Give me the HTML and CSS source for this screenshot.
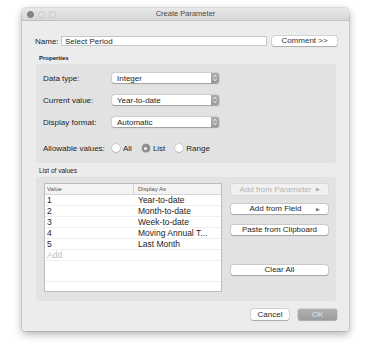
FILE: index.html
```html
<!DOCTYPE html>
<html>
<head>
<meta charset="utf-8">
<link rel="stylesheet" href="styles.css">
</head>
<body>
<div class="window">
  <div class="titlebar">
    <div class="lights"><span class="light dark"></span><span class="light"></span><span class="light"></span></div>
    <div class="title">Create Parameter</div>
    <div></div>
  </div>
  <div class="content">
    <div class="name-row">
      <span class="name-label">Name:</span>
      <div class="textfield">Select Period</div>
      <div class="btn comment">Comment &gt;&gt;</div>
    </div>
    <div class="section-label bold">Properties</div>
    <div class="panel props">
      <div class="prop-row"><span class="prop-label">Data type:</span><div class="select"><span>Integer</span><span class="stepper"><svg width="8" height="10" viewBox="0 0 8 10"><path d="M2.3 4 L4 2.4 L5.7 4 M2.3 6 L4 7.6 L5.7 6" fill="none" stroke="#fff" stroke-width="0.9"/></svg></span></div></div>
      <div class="prop-row"><span class="prop-label">Current value:</span><div class="select"><span>Year-to-date</span><span class="stepper"><svg width="8" height="10" viewBox="0 0 8 10"><path d="M2.3 4 L4 2.4 L5.7 4 M2.3 6 L4 7.6 L5.7 6" fill="none" stroke="#fff" stroke-width="0.9"/></svg></span></div></div>
      <div class="prop-row"><span class="prop-label">Display format:</span><div class="select"><span>Automatic</span><span class="stepper"><svg width="8" height="10" viewBox="0 0 8 10"><path d="M2.3 4 L4 2.4 L5.7 4 M2.3 6 L4 7.6 L5.7 6" fill="none" stroke="#fff" stroke-width="0.9"/></svg></span></div></div>
      <div class="prop-row radio-row"><span class="prop-label">Allowable values:</span>
        <span class="radio"><span class="dot"></span>All</span>
        <span class="radio"><span class="dot on"></span>List</span>
        <span class="radio"><span class="dot"></span>Range</span>
      </div>
    </div>
    <div class="section-label">List of values</div>
    <div class="panel list-panel">
      <div class="table">
        <div class="trow head"><span class="c1">Value</span><span class="c2">Display As</span></div>
        <div class="trow"><span class="c1">1</span><span class="c2">Year-to-date</span></div>
        <div class="trow"><span class="c1">2</span><span class="c2">Month-to-date</span></div>
        <div class="trow"><span class="c1">3</span><span class="c2">Week-to-date</span></div>
        <div class="trow"><span class="c1">4</span><span class="c2">Moving Annual T...</span></div>
        <div class="trow"><span class="c1">5</span><span class="c2">Last Month</span></div>
        <div class="trow add"><span class="c1">Add</span><span class="c2"></span></div>
        <div class="trow empty"><span class="c1"></span><span class="c2"></span></div>
      </div>
      <div class="side">
        <div class="btn sbtn disabled b1"><span class="lbl">Add from Parameter</span><span class="arrow">&#9654;</span></div>
        <div class="btn sbtn b2"><span class="lbl">Add from Field</span><span class="arrow">&#9654;</span></div>
        <div class="btn sbtn b3"><span class="lbl center">Paste from Clipboard</span></div>
        <div class="btn sbtn b4"><span class="lbl center">Clear All</span></div>
      </div>
    </div>
    <div class="footer">
      <div class="btn cancel">Cancel</div>
      <div class="btn ok">OK</div>
    </div>
  </div>
</div>
</body>
</html>
```
FILE: styles.css
```css
* { box-sizing: border-box; }
html, body { margin: 0; padding: 0; background: #ffffff; }
body {
  font-family: "Liberation Sans", Arial, sans-serif;
  font-size: 8px;
  color: #1e1e1e;
  width: 374px;
  height: 351px;
  overflow: hidden;
}
.window {
  margin: 8px 0 0 22px;
  width: 327px;
  height: 323px;
  background: #ececec;
  border-radius: 4px 4px 2px 2px;
  box-shadow: 0 3px 8px rgba(0,0,0,0.32), 0 0 0 0.5px rgba(0,0,0,0.18);
  overflow: hidden;
}
.titlebar {
  height: 13px;
  display: grid;
  grid-template-columns: 1fr auto 1fr;
  align-items: center;
  background: linear-gradient(#e8e8e8, #d6d6d6);
  border-bottom: 1px solid #c2c2c2;
}
.lights { display: flex; gap: 4px; padding-left: 5px; }
.light {
  width: 7px; height: 7px; border-radius: 50%;
  background: #e2e2e2; border: 0.5px solid #c6c6c6;
}
.light.dark { background: #858585; border-color: #7a7a7a; }
.title { font-size: 7.5px; color: #4a4a4a; line-height: 12px; }
.content { padding: 15px 12px 11px 13px; }
.name-row { display: flex; align-items: center; height: 10px; }
.name-label { width: 26px; font-size: 8px; }
.textfield {
  width: 206px; height: 10px; background: #fff;
  border: 0.5px solid #c6c6c6; padding-left: 3px; line-height: 9px;
}
.btn {
  background: #fff; border-radius: 2px; height: 11px; line-height: 11px;
  text-align: center;
  box-shadow: 0 0 0 0.5px rgba(0,0,0,0.18), 0 0.5px 1px rgba(0,0,0,0.2);
}
.comment { width: 65px; margin-left: 5px; height: 10px; line-height: 10px; color: #333; }
.section-label {
  font-size: 6.5px; line-height: 8px; padding-left: 4px; color: #222;
  margin: 4px 0 2px;
}
.section-label.bold { font-weight: bold; font-size: 6px; margin-top: 8px; }
.panel { background: #e2e2e2; border-radius: 3px; margin: 0 1px; }
.props { padding: 9px 7px 10px; display: flex; flex-direction: column; gap: 12px; }
.prop-row { display: flex; align-items: center; height: 10px; }
.radio-row { margin-top: 4px; }
.prop-label { width: 69px; flex: none; }
.select {
  width: 107px; height: 10px; background: #fff; border-radius: 2px;
  display: flex; justify-content: space-between; align-items: center;
  padding-left: 5px;
  box-shadow: 0 0 0 0.5px rgba(0,0,0,0.12), 0 0.5px 1px rgba(0,0,0,0.25);
}
.stepper {
  width: 8px; height: 10px; background: linear-gradient(#adadad, #999);
  border-radius: 0 2px 2px 0; display: flex;
}
.radio { display: flex; align-items: center; gap: 3px; margin-right: 10px; }
.dot {
  width: 8px; height: 8px; border-radius: 50%; background: #fff;
  box-shadow: 0 0 0 0.5px rgba(0,0,0,0.18), 0 0.5px 1px rgba(0,0,0,0.2);
  display: flex; align-items: center; justify-content: center;
}
.dot.on { background: #8e8e8e; }
.dot.on::after {
  content: ""; width: 3px; height: 3px; border-radius: 50%; background: #f4f4f4;
}
.list-panel { height: 124px; padding: 6px 8px 9px; display: flex; gap: 9px; }
.table {
  width: 178px; height: 109px; background: #fff;
  border: 1px solid #bdbdbd;
}
.trow { display: flex; height: 11px; line-height: 11px; border-bottom: 0.5px solid #efefef; font-size: 8.5px; }
.trow .c1 { width: 88px; padding-left: 2px; }
.trow .c2 { flex: 1; padding-left: 5px; }
.trow.head { background: #f3f3f3; border-bottom: 0.5px solid #d6d6d6; font-size: 6px; color: #555; }
.trow.head .c2 { border-left: 0.5px solid #d4d4d4; padding-left: 4px; }
.trow.add { color: #c0c0c0; }
.trow.empty { height: 21px; }
.side { width: 97px; display: flex; flex-direction: column; }
.sbtn { display: flex; justify-content: center; position: relative; }
.sbtn .lbl { padding-right: 8px; }
.sbtn .lbl.center { padding-right: 0; }
.sbtn .arrow { position: absolute; right: 8px; top: 0; font-size: 5px; color: #7a7a7a; }
.sbtn.disabled { color: #b5b5b5; background: #f1f1f1; box-shadow: 0 0 0 0.5px rgba(0,0,0,0.08); }
.sbtn.disabled .arrow { color: #a8a8a8; }
.b1 { margin-top: 1px; }
.b2 { margin-top: 9px; height: 10px; line-height: 10px; }
.b3 { margin-top: 11px; height: 10px; line-height: 10px; }
.b4 { margin-top: 30px; height: 10px; line-height: 10px; }
.footer { display: flex; justify-content: flex-end; gap: 9px; margin-top: 8px; }
.cancel { width: 38px; }
.ok {
  width: 39px; background: linear-gradient(#b0b0b0, #9c9c9c); color: #e2e2e2;
}
```
